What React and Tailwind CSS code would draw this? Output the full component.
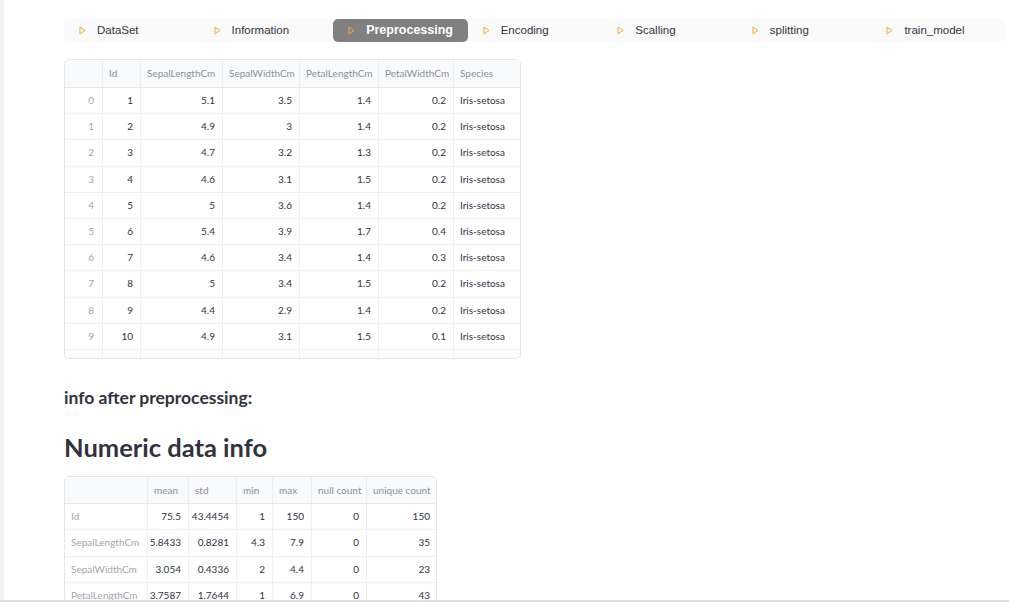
import React from 'react';

const tabs = ['DataSet', 'Information', 'Preprocessing', 'Encoding', 'Scalling', 'splitting', 'train_model'];

const irisCols = [
  { name: '', w: 38 },
  { name: 'Id', w: 38 },
  { name: 'SepalLengthCm', w: 82 },
  { name: 'SepalWidthCm', w: 77 },
  { name: 'PetalLengthCm', w: 79 },
  { name: 'PetalWidthCm', w: 75 },
  { name: 'Species', w: 67 },
];

const irisRows = [
  [1, 5.1, 3.5, 1.4, 0.2],
  [2, 4.9, 3, 1.4, 0.2],
  [3, 4.7, 3.2, 1.3, 0.2],
  [4, 4.6, 3.1, 1.5, 0.2],
  [5, 5, 3.6, 1.4, 0.2],
  [6, 5.4, 3.9, 1.7, 0.4],
  [7, 4.6, 3.4, 1.4, 0.3],
  [8, 5, 3.4, 1.5, 0.2],
  [9, 4.4, 2.9, 1.4, 0.2],
  [10, 4.9, 3.1, 1.5, 0.1],
];

const infoCols = [
  { name: '', w: 83 },
  { name: 'mean', w: 41 },
  { name: 'std', w: 48 },
  { name: 'min', w: 36 },
  { name: 'max', w: 39 },
  { name: 'null count', w: 55 },
  { name: 'unique count', w: 70 },
];

const infoRows = [
  ['Id', '75.5', '43.4454', '1', '150', '0', '150'],
  ['SepalLengthCm', '5.8433', '0.8281', '4.3', '7.9', '0', '35'],
  ['SepalWidthCm', '3.054', '0.4336', '2', '4.4', '0', '23'],
  ['PetalLengthCm', '3.7587', '1.7644', '1', '6.9', '0', '43'],
];

function PlayIcon() {
  return (
    <svg width="7" height="9" viewBox="0 0 7 9" className="shrink-0">
      <polygon points="1,1 6,4.5 1,8" fill="none" stroke="#f7a534" strokeWidth="1" strokeLinejoin="round" />
    </svg>
  );
}

function HeaderCell({ w, children }) {
  return (
    <div style={{ width: w }} className="shrink-0 h-full flex items-center px-[6px] border-r border-[#eceef2] last:border-r-0 text-[#8c8f9a] whitespace-nowrap overflow-hidden">
      {children}
    </div>
  );
}

export default function App() {
  return (
    <div className="h-[603px] w-[1009px] flex flex-col bg-white overflow-hidden" style={{ fontFamily: 'Lato, "Noto Sans", sans-serif' }}>
      <div className="flex flex-1 overflow-hidden">
        {/* sidebar edge */}
        <div className="w-[4px] bg-[#f2f3f6] shrink-0"></div>

        <main className="flex-1 pl-[60px] pt-[19px]">
          {/* tab bar */}
          <nav className="w-[942px] h-[23px] grid grid-cols-7 bg-[#fafafa] rounded-[6px]" style={{ fontFamily: '"Liberation Sans", Arial, sans-serif' }}>
            {tabs.map((t) => {
              const active = t === 'Preprocessing';
              return (
                <div
                  key={t}
                  className={`flex items-center gap-[11px] pl-[15px] rounded-[5px] ${active ? 'bg-[#808080] text-white font-bold text-[12.5px]' : 'text-[#31333f] text-[11.5px]'}`}
                >
                  <PlayIcon />
                  <span>{t}</span>
                </div>
              );
            })}
          </nav>

          {/* dataframe */}
          <div className="mt-[17px] w-[457px] h-[300px] border border-[#e4e6eb] rounded-[5px] overflow-hidden text-[10px]">
            <div className="flex h-[28px] bg-[#f9fafb] border-b border-[#e8eaee]">
              {irisCols.map((c, i) => (
                <HeaderCell key={i} w={c.w}>{c.name}</HeaderCell>
              ))}
            </div>
            {irisRows.map((r, idx) => (
              <div key={idx} className="flex h-[26.2px] border-b border-[#eef0f3]">
                <div style={{ width: 38 }} className="shrink-0 flex items-center justify-end px-[8px] border-r border-[#eceef2] text-[#a3a6ae]">{idx}</div>
                {r.map((v, j) => (
                  <div key={j} style={{ width: irisCols[j + 1].w }} className="shrink-0 flex items-center justify-end px-[7px] border-r border-[#eceef2] text-[#31333f]">{v}</div>
                ))}
                <div style={{ width: 67 }} className="shrink-0 flex items-center px-[6px] text-[#31333f]">Iris-setosa</div>
              </div>
            ))}
            <div className="flex h-[26px]">
              {irisCols.map((c, i) => (
                <div key={i} style={{ width: c.w }} className="shrink-0 border-r border-[#eceef2] last:border-r-0"></div>
              ))}
            </div>
          </div>

          <p className="mt-[27px] text-[17.5px] leading-[24px] font-bold text-[#31333f]">info after preprocessing:</p>

          <h1 className="mt-[20px] text-[25.5px] leading-[34px] font-bold text-[#31333f]">Numeric data info</h1>

          <div className="mt-[12px] w-[373px] border border-[#e4e6eb] rounded-[5px] overflow-hidden text-[10px]">
            <div className="flex h-[27px] bg-[#f9fafb] border-b border-[#e8eaee]">
              {infoCols.map((c, i) => (
                <HeaderCell key={i} w={c.w}>{c.name}</HeaderCell>
              ))}
            </div>
            {infoRows.map((r, idx) => (
              <div key={idx} className="flex h-[26.3px] border-b border-[#eef0f3]">
                {r.map((v, j) =>
                  j === 0 ? (
                    <div key={j} style={{ width: infoCols[0].w }} className="shrink-0 flex items-center px-[6px] border-r border-[#eceef2] text-[#a3a6ae] whitespace-nowrap">{v}</div>
                  ) : (
                    <div key={j} style={{ width: infoCols[j].w }} className="shrink-0 flex items-center justify-end px-[7px] border-r border-[#eceef2] last:border-r-0 text-[#31333f]">{v}</div>
                  )
                )}
              </div>
            ))}
          </div>
        </main>
      </div>
      <div className="h-[2px] bg-[#dedfe2] shrink-0"></div>
      <div className="h-[1px] bg-white shrink-0"></div>
    </div>
  );
}
